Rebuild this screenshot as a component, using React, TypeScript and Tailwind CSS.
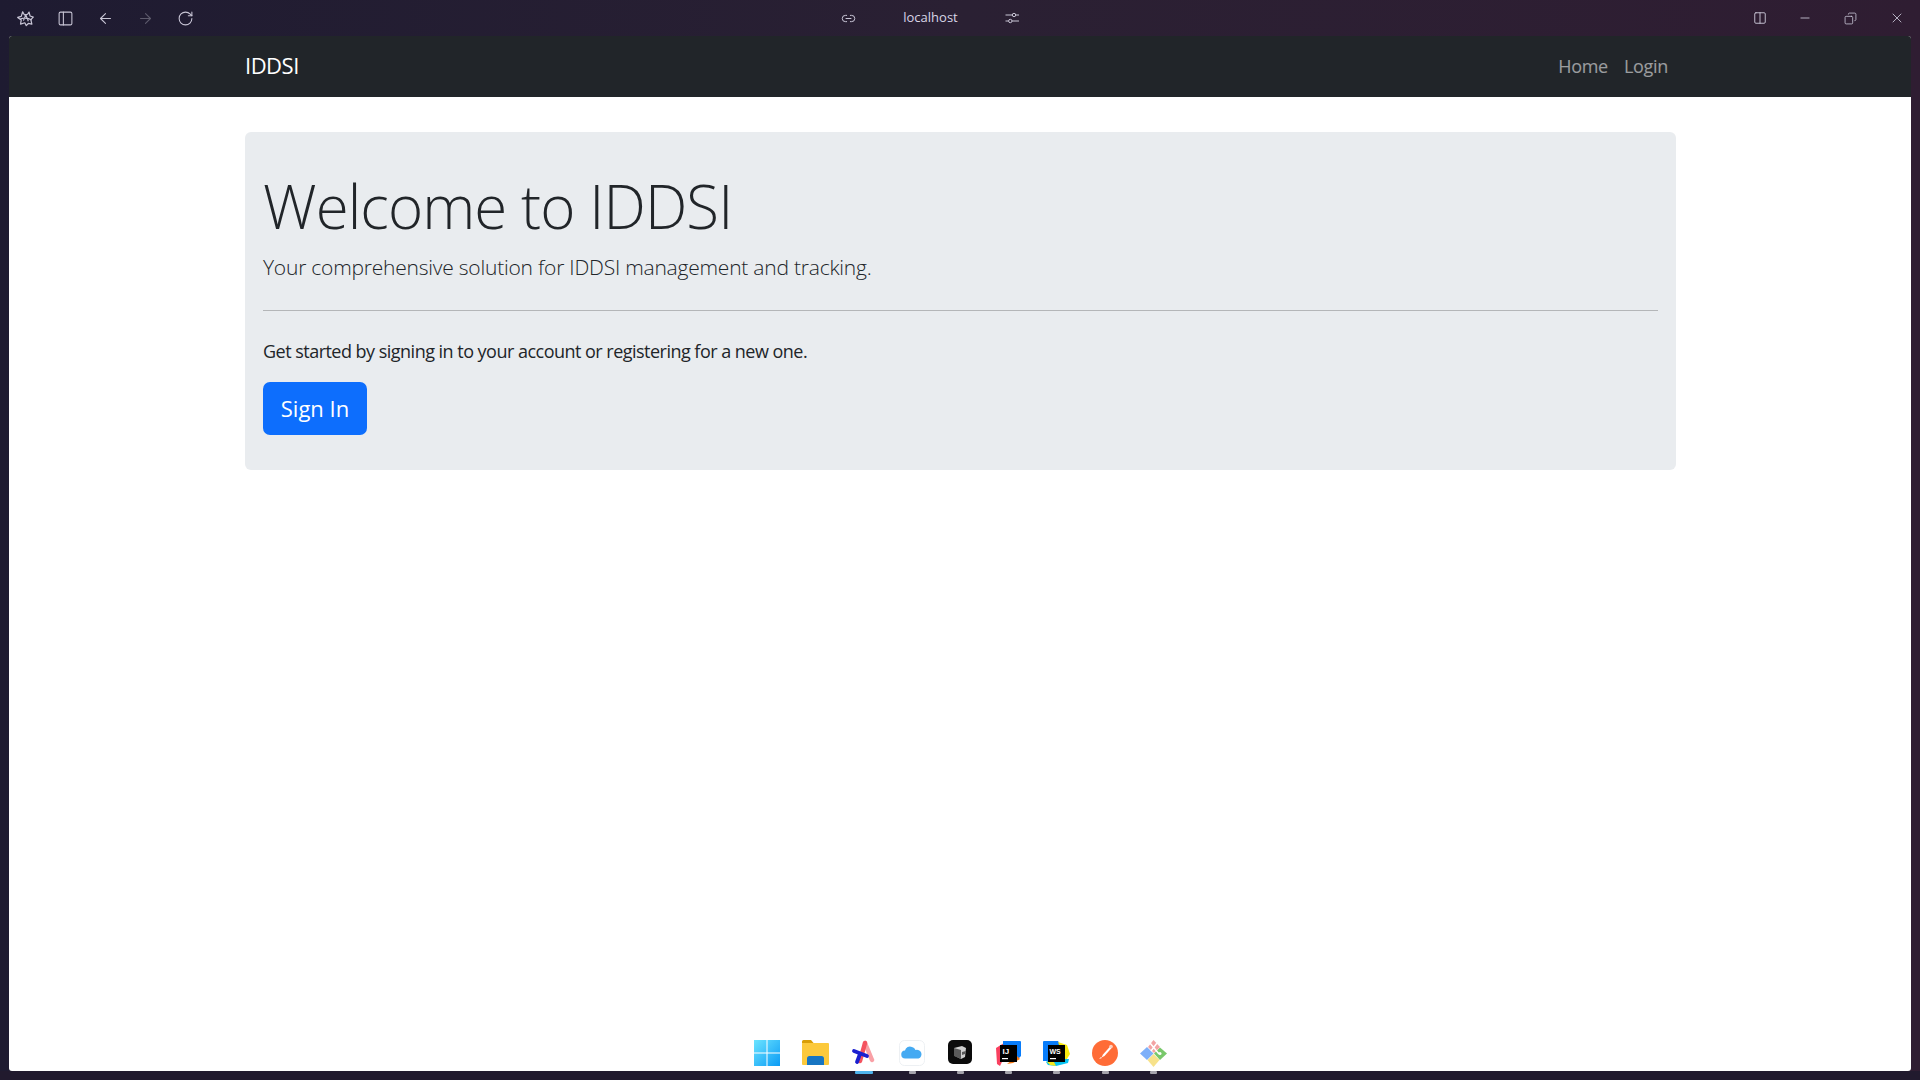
import { ArrowLeft, ArrowRight, Columns2, Link2, Minus, PanelLeft, RotateCw, Copy, X } from "lucide-react";

const font = { fontFamily: '"Open Sans", sans-serif' };

function BrowserLogo() {
  return (
    <svg width="17" height="17" viewBox="0 0 24 24" fill="none" stroke="#c9c6d6" strokeWidth="1.7" strokeLinejoin="round">
      <path d="M8 2.500 10.500 7 15 6l2-3 1.500 5.500L23 10l-3.500 3.500L21 20l-5-1-3 3-2-4-6 2 1-6-5-3.500L6 9z" />
      <path d="M9 15 12.500 7 16 16M4 13c5-2 11-2 17 1" />
    </svg>
  );
}

function TuneIcon() {
  return (
    <svg width="14" height="12" viewBox="0 0 14 12" fill="none" stroke="#c9c6d6" strokeWidth="1">
      <path d="M0.500 3h7M11 3h3M0.500 9h3M7 9h7" />
      <circle cx="9" cy="3" r="1.700" />
      <circle cx="5.300" cy="9" r="1.700" />
    </svg>
  );
}

function WindowsIcon() {
  return (
    <svg width="26" height="26" viewBox="0 0 26 26">
      <defs>
        <linearGradient id="win" x1="0" y1="0" x2="1" y2="1">
          <stop offset="0" stopColor="#6be4ff" />
          <stop offset="1" stopColor="#0b9bf5" />
        </linearGradient>
      </defs>
      <rect width="26" height="26" fill="url(#win)" />
      <path d="M12.500 0h1v26h-1zM0 12.500h26v1H0z" fill="#fff" />
    </svg>
  );
}

function FolderIcon() {
  return (
    <svg width="27" height="26" viewBox="0 0 27 26">
      <path d="M0 1.500A1.500 1.500 0 0 1 1.500 0H9l3 3.500H0z" fill="#d99e06" />
      <rect y="3" width="27" height="22" rx="1" fill="#fcc93b" />
      <path d="M5 25v-6.500A2.500 2.500 0 0 1 7.500 16h12a2.500 2.500 0 0 1 2.500 2.500V25z" fill="#1775c2" />
    </svg>
  );
}

function StarIcon() {
  return (
    <svg width="26" height="26" viewBox="0 0 26 26" fill="none" strokeLinecap="round">
      <path d="M14 3 21 20" stroke="#f9a0a6" strokeWidth="4.500" />
      <path d="M9 21 14 3" stroke="#f4525f" strokeWidth="4.500" />
      <path d="M3 11 16 16" stroke="#1a1fd0" strokeWidth="3.800" />
      <path d="M9 14 6 22" stroke="#1a1fd0" strokeWidth="3.800" />
    </svg>
  );
}

function CloudIcon() {
  return (
    <svg width="26" height="26" viewBox="0 0 26 26">
      <rect x="0.500" y="0.500" width="25" height="25" rx="5" fill="#fff" stroke="#edf0f3" />
      <path d="M6.500 18.500a4 4 0 0 1-.5-8 5 5 0 0 1 7-3.500 5 5 0 0 1 3.500 3 4.300 4.300 0 0 1 3 8.500z" fill="#45aaf2" />
    </svg>
  );
}

function BoxIcon() {
  return (
    <svg width="24" height="24" viewBox="0 0 24 24">
      <rect width="24" height="24" rx="5" fill="#0b0b0b" />
      <path d="M6 8l8-2 4 2-1 9-4 2-6-3z" fill="#cfcfcf" />
      <path d="M6 8l7 2v9l-7-3zM14 12l4-1-1 3-3 1z" fill="#5a5a5a" />
    </svg>
  );
}

function IdeaIcon() {
  return (
    <svg width="27" height="27" viewBox="0 0 27 27">
      <path d="M1 8 9 3l4 6-8 17-3-2z" fill="#f9405f" />
      <path d="M8 1h17a1 1 0 0 1 1 1v14l-6 6L8 8z" fill="#087cfa" />
      <path d="M12 24l10-8 3 3-7 4z" fill="#f97a12" />
      <rect x="5" y="5" width="17" height="17" fill="#000" />
      <text x="7.500" y="14" fill="#fff" fontSize="8" fontWeight="700" fontFamily="Liberation Sans, sans-serif">IJ</text>
      <rect x="7" y="18" width="6" height="1.200" fill="#fff" />
    </svg>
  );
}

function WebStormIcon() {
  return (
    <svg width="27" height="27" viewBox="0 0 27 27">
      <path d="M0 2a1 1 0 0 1 1-1h14l4 6-14 14H0z" fill="#087cfa" />
      <path d="M15 2l9 3 3 9-5 8z" fill="#f9e90f" />
      <path d="M3 22l4-3h19l-1 4-12 3-8-1z" fill="#07c3f2" />
      <path d="M4 22l6-2 3 6-6-1z" fill="#f4e71d" />
      <rect x="5" y="5" width="17" height="17" fill="#000" />
      <text x="6.500" y="13.500" fill="#fff" fontSize="7" fontWeight="700" fontFamily="Liberation Sans, sans-serif">WS</text>
      <rect x="7" y="18" width="6" height="1.200" fill="#fff" />
    </svg>
  );
}

function PostmanIcon() {
  return (
    <svg width="26" height="26" viewBox="0 0 26 26">
      <circle cx="13" cy="13" r="13" fill="#ff6c37" />
      <path d="M19 5.500 20.500 7l-8 9-3 1.500L11 14.500z" fill="#fff" />
      <path d="M7 19l2-2 1 1z" fill="#fff" />
      <circle cx="19" cy="6.500" r="1.800" fill="#ffd0bf" />
    </svg>
  );
}

function GitToolIcon() {
  return (
    <svg width="27" height="27" viewBox="0 0 27 27">
      <path d="M13.500 13.500 7 7 0 13.500 7 20z" fill="#7eb0f9" />
      <path d="M13.500 14 7.500 20l6 7 6-7z" fill="#f7e28b" />
      <path d="M14 13.500 20 7.500l7 6-7 6.500z" fill="#79c86b" />
      <path d="M14 13 8 7l5.500-7L20 7z" fill="#f3a3a3" />
      <path d="M10 3l9 11M17 3 11 11" stroke="#fff" strokeWidth="1.500" />
      <circle cx="20" cy="13.500" r="1.500" fill="#fff" />
    </svg>
  );
}

const dockIcons = [
  { key: "start", icon: <WindowsIcon />, mark: "none" },
  { key: "files", icon: <FolderIcon />, mark: "none" },
  { key: "arc", icon: <StarIcon />, mark: "active" },
  { key: "cloud", icon: <CloudIcon />, mark: "dot" },
  { key: "box", icon: <BoxIcon />, mark: "dot" },
  { key: "idea", icon: <IdeaIcon />, mark: "dot" },
  { key: "webstorm", icon: <WebStormIcon />, mark: "dot" },
  { key: "postman", icon: <PostmanIcon />, mark: "dot" },
  { key: "git", icon: <GitToolIcon />, mark: "dot" },
];

function TopBar() {
  return (
    <div className="h-[36px] flex items-center justify-between text-[#c9c6d6] shrink-0">
      <div className="flex items-center w-[270px] pl-[17px] gap-[23px]">
        <BrowserLogo />
        <PanelLeft size={17} strokeWidth={1.5} />
        <ArrowLeft size={17} strokeWidth={1.5} />
        <ArrowRight size={17} strokeWidth={1.5} className="text-[#5d5a6c]" />
        <RotateCw size={17} strokeWidth={1.5} />
      </div>
      <div className="flex items-center gap-[47px]">
        <Link2 size={15} strokeWidth={1.6} />
        <span className="text-[13px] text-[#d8d5e6]" style={font}>localhost</span>
        <TuneIcon />
      </div>
      <div className="flex items-center justify-end w-[330px] pr-[15px] gap-[32px]">
        <Columns2 size={14} strokeWidth={1.6} className="mr-[-1px]" />
        <Minus size={14} strokeWidth={1.5} />
        <Copy size={13} strokeWidth={1.5} className="-scale-x-100" />
        <X size={16} strokeWidth={1.3} />
      </div>
    </div>
  );
}

export default function App() {
  return (
    <div className="h-screen w-full flex flex-col overflow-hidden bg-gradient-to-r from-[#1e1b31] via-[#2a2033] to-[#2f1d32]" style={font}>
      <TopBar />
      <div className="flex-1 mx-[9px] rounded-[3px] bg-white flex flex-col overflow-hidden">
        <nav className="h-[61px] bg-[#212529] shrink-0 flex items-center justify-between pl-[236px] pr-[243px]">
          <span className="text-[22px] text-white tracking-[-0.5px] pb-[2px]">IDDSI</span>
          <div className="flex gap-[16px] text-[18px] text-white/55 tracking-[-0.3px]">
            <span>Home</span>
            <span>Login</span>
          </div>
        </nav>
        <main className="flex-1 flex flex-col">
          <div className="ml-[236px] mt-[35px] w-[1431px] h-[338px] bg-[#e9ecef] rounded-[6px] px-[18px] pt-[38px]">
            <h1 className="text-[60px] leading-[72px] font-light text-[#212529] tracking-[-0.9px]">Welcome to IDDSI</h1>
            <p className="mt-[9px] text-[21px] leading-[32px] font-light text-[#212529] tracking-[-0.22px]">Your comprehensive solution for IDDSI management and tracking.</p>
            <hr className="mt-[27px] border-[#b4b6b8]" />
            <p className="mt-[27px] text-[18px] leading-[27px] text-[#212529] tracking-[-0.52px]">Get started by signing in to your account or registering for a new one.</p>
            <button className="mt-[17px] w-[104px] h-[53px] rounded-[7px] bg-[#0d6efd] text-white text-[22px]">Sign In</button>
          </div>
          <div className="mt-auto pl-[734px] flex h-[31px]">
            {dockIcons.map((d) => (
              <div key={d.key} className="w-[48.300px] flex justify-center items-start">{d.icon}</div>
            ))}
          </div>
        </main>
      </div>
      <div className="h-[9px] pl-[743px] flex shrink-0 bg-[#211a2e]">
        {dockIcons.map((d) => (
          <div key={d.key} className="w-[48.300px] flex justify-center">
            {d.mark === "active" && <div className="w-[18px] h-[3px] bg-[#4fb4ee] rounded-[1px]" />}
            {d.mark === "dot" && <div className="w-[7px] h-[3px] bg-[#a6a4ad] rounded-[1px]" />}
          </div>
        ))}
      </div>
    </div>
  );
}
